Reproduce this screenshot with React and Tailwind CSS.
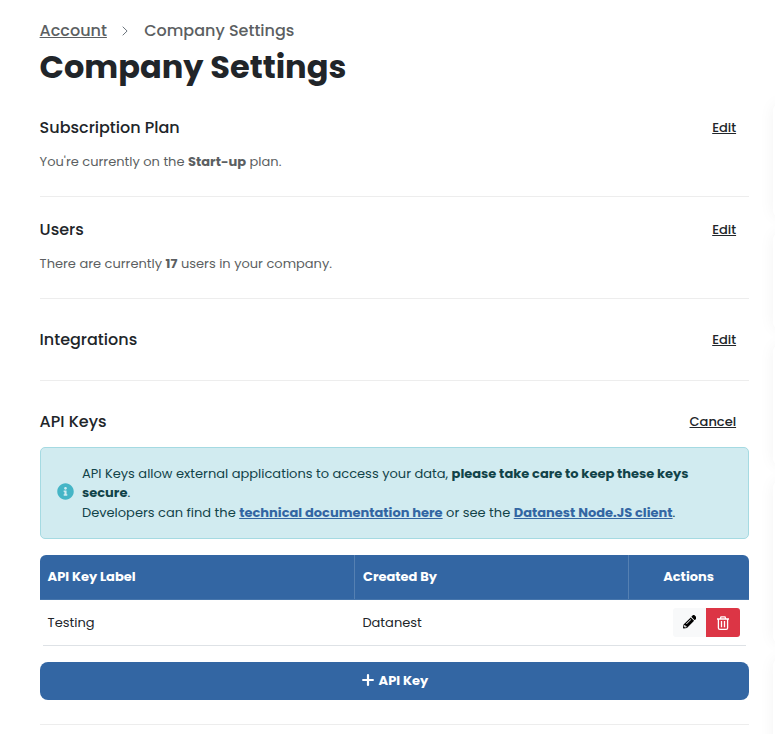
import { FaInfoCircle, FaPencilAlt } from "react-icons/fa";

function TrashIcon() {
  return (
    <svg width="12" height="14" viewBox="0 0 12 14" fill="none" stroke="white" strokeWidth="1.3">
      <path d="M0 3h12M1.4 3v8.9c0 .8.6 1.4 1.4 1.4h6.4c.8 0 1.4-.6 1.4-1.4V3M3.2 3 4 .8h4L8.8 3" />
      <path d="M4.5 5v6.2M7.5 5v6.2" />
    </svg>
  );
}

function PlusIcon() {
  return (
    <svg width="12" height="12" viewBox="0 0 12 12" fill="none" stroke="white" strokeWidth="2.2" strokeLinecap="round">
      <path d="M6 1.1v9.8M1.1 6h9.8" />
    </svg>
  );
}

function SectionHeader({ title, action }) {
  return (
    <div className="flex h-6 items-center justify-between pr-[12.5px]">
      <h2 className="text-[16px] font-medium">{title}</h2>
      <a className="text-[13px] font-medium underline">{action}</a>
    </div>
  );
}

export default function App() {
  return (
    <div className="flex h-[734px] w-[775px] overflow-hidden whitespace-nowrap bg-white font-['Poppins','Inter',sans-serif] text-[#212529]">
      <main className="ml-[39.6px] w-[709px] shrink-0 pt-[19px]">
        <nav className="flex h-6 items-center text-[16px] font-medium text-[#5c5f62]">
          <a className="w-[67px] underline">Account</a>
          <svg className="ml-[15.4px] mr-[16.2px]" width="6" height="10" viewBox="0 0 6 10" fill="none" stroke="#6c757d" strokeWidth="1">
            <path d="m.7.7 4.4 4.3L.7 9.3" />
          </svg>
          <span>Company Settings</span>
        </nav>
        <h1 className="h-12 text-[32px] font-bold leading-[48px]">Company Settings</h1>

        <section className="h-[106px] border-b border-[#ededed] pt-[25px]">
          <SectionHeader title="Subscription Plan" action="Edit" />
          <p className="mt-3 text-[13px] leading-5 text-[#5c5f62]">
            You're currently on the <b>Start-up</b> plan.
          </p>
        </section>
        <section className="h-[102px] border-b border-[#ededed] pt-[21px]">
          <SectionHeader title="Users" action="Edit" />
          <p className="mt-3 text-[13px] leading-5 text-[#5c5f62]">
            There are currently <b>17</b> users in your company.
          </p>
        </section>
        <section className="h-[82px] border-b border-[#ededed] pt-[29px]">
          <SectionHeader title="Integrations" action="Edit" />
        </section>

        <section className="h-[344px] border-b border-[#ededed] pt-[29px]">
          <SectionHeader title="API Keys" action="Cancel" />
          <div className="mt-[13px] flex h-[92px] items-center rounded-[5px] border border-[#a5dae2] bg-[#d1ebf0] pl-4 text-[13px] leading-[19.5px] text-[#114349]">
            <FaInfoCircle className="mb-[3px] mr-[8.4px] size-[17px] text-[#45b5c6]" />
            <div>
              <p>API Keys allow external applications to access your data, <b>please take care to keep these keys</b></p>
              <p><b>secure</b>.</p>
              <p>
                Developers can find the <a className="font-bold text-[#3366a3] underline">technical documentation here</a> or see the{" "}
                <a className="font-bold text-[#3366a3] underline">Datanest Node.JS client</a>.
              </p>
            </div>
          </div>

          <div className="mt-4 text-[13px]">
            <div className="grid h-[45px] grid-cols-[314px_274px_121px] overflow-hidden rounded-t-[6px] border-b border-[#4776ac] bg-[#3366a3] font-bold leading-[43px] text-white">
              <div className="pl-2">API Key Label</div>
              <div className="border-l border-[#5580b2] pl-[8.4px]">Created By</div>
              <div className="border-l border-[#5580b2] text-center">Actions</div>
            </div>
            <div className="mx-[3px] grid h-[46px] grid-cols-[311px_274px_118px] items-center border-b border-[#dee2e6]">
              <div className="pl-[5px]">Testing</div>
              <div className="pl-[8.8px]">Datanest</div>
              <div className="flex justify-end pr-[6px]">
                <button className="flex h-[29px] w-[33px] items-center justify-center rounded-l-[3px] bg-[#f8f9fa] pb-px pl-px text-black">
                  <FaPencilAlt className="size-[13.5px]" />
                </button>
                <button className="flex h-[29px] w-[34px] items-center justify-center rounded-r-[3px] bg-[#dc3545]">
                  <TrashIcon />
                </button>
              </div>
            </div>
          </div>
          <button className="mt-4 flex h-[38px] w-full items-center justify-center gap-[5px] rounded-[8px] bg-[#3366a3] pl-[1.6px] text-[13px] font-bold text-white">
            <span className="mb-[2px]"><PlusIcon /></span>
            API Key
          </button>
        </section>
      </main>
      <aside className="ml-6 flex w-40 shrink-0 flex-col gap-4 pt-[104px]">
        <div className="h-[113px] shrink-0 rounded-md bg-white shadow-[0_0_16px_rgba(0,0,0,0.05)]" />
        <div className="h-[96px] shrink-0 rounded-md bg-white shadow-[0_0_16px_rgba(0,0,0,0.05)]" />
        <div className="h-[120px] shrink-0 rounded-md bg-white shadow-[0_0_16px_rgba(0,0,0,0.05)]" />
        <div className="h-[162px] shrink-0 rounded-md bg-white shadow-[0_0_16px_rgba(0,0,0,0.05)]" />
        <div className="h-[162px] shrink-0 rounded-md bg-white shadow-[0_0_16px_rgba(0,0,0,0.05)]" />
      </aside>
    </div>
  );
}
